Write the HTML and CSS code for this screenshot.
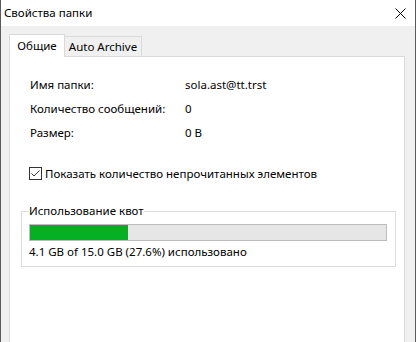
FILE: index.html
```html
<!DOCTYPE html>
<html lang="ru">
<head>
  <meta charset="UTF-8" />
  <title>Свойства папки</title>
  <link rel="stylesheet" href="styles.css">
</head>
<body>
  <div class="window">
    <div class="titlebar">
      <span class="title">Свойства папки</span>
      <svg class="close" width="11" height="11" viewBox="0 0 11 11">
        <path d="M0.5 0.5 L10.5 10.5 M10.5 0.5 L0.5 10.5" stroke="#000" stroke-width="1" fill="none" />
      </svg>
    </div>
    <div class="content">
      <div class="tabs">
        <div class="tab active">Общие</div>
        <div class="tab">Auto Archive</div>
      </div>
      <div class="panel">
        <div class="info">
          <div class="label">Имя папки:</div>
          <div class="value">sola.ast@tt.trst</div>
          <div class="label">Количество сообщений:</div>
          <div class="value">0</div>
          <div class="label">Размер:</div>
          <div class="value">0 B</div>
        </div>
        <div class="check-row">
          <span class="checkbox">
            <svg width="13" height="13" viewBox="0 0 13 13">
              <rect x="0.5" y="0.5" width="12" height="12" fill="#fff" stroke="#333" />
              <path d="M2.5 6.5 L5 9 L10.5 3.5" stroke="#333" stroke-width="1" fill="none" />
            </svg>
          </span>
          <span>Показать количество непрочитанных элементов</span>
        </div>
        <fieldset class="quota">
          <legend>Использование квот</legend>
          <div class="bar"><div class="fill" style="width: 27.6%"></div></div>
          <div class="usage">4.1 GB of 15.0 GB (27.6%) использовано</div>
        </fieldset>
      </div>
    </div>
  </div>
</body>
</html>
```

FILE: styles.css
```css
body {
  margin: 0;
  font-family: 'Noto Sans', sans-serif;
  font-size: 11.5px;
  color: #000;
  background: #f0f0f0;
  overflow: hidden;
}

.window {
  height: 342px;
  border-left: 1px solid #5a5a5a;
  border-right: 1px solid #5a5a5a;
  background: #f0f0f0;
  display: flex;
  flex-direction: column;
}

.titlebar {
  height: 26px;
  background: #fff;
  display: flex;
  align-items: center;
  justify-content: space-between;
  padding: 0 9px 0 3px;
}

.title {
  line-height: 16px;
}

.close {
  display: block;
  margin-top: 1px;
}

.content {
  flex: 1;
  padding: 8px 10px 0 8px;
  display: flex;
  flex-direction: column;
}

.tabs {
  display: flex;
  align-items: flex-end;
}

.tab {
  box-sizing: border-box;
  height: 20px;
  width: 77px;
  border: 1px solid #d9d9d9;
  border-bottom: none;
  border-left: none;
  background: #f0f0f0;
  text-align: center;
  line-height: 19px;
}

.tab.active {
  width: 56px;
  height: 23px;
  border-left: 1px solid #d9d9d9;
  background: #fff;
  margin-bottom: -1px;
  position: relative;
  z-index: 1;
  line-height: 22px;
}

.panel {
  flex: 1;
  background: #fff;
  border: 1px solid #d9d9d9;
  border-bottom: none;
  padding: 15px 8px 0 11px;
}

.info {
  display: grid;
  grid-template-columns: 155px 1fr;
  grid-auto-rows: 24px;
  align-items: center;
  padding-left: 9px;
}

.check-row {
  display: flex;
  align-items: center;
  gap: 3px;
  height: 24px;
  margin-top: 17px;
  padding-left: 8px;
}

.checkbox svg {
  display: block;
}

.quota {
  margin: 18px 0 0 0;
  border: 1px solid #dcdcdc;
  padding: 5px 8px 6px 7px;
}

.quota legend {
  padding: 0;
  line-height: 16px;
}

.bar {
  height: 15px;
  border: 1px solid #bcbcbc;
  background: #e6e6e6;
}

.fill {
  height: 100%;
  background: #06b025;
}

.usage {
  margin-top: 3px;
  line-height: 16px;
}
```
